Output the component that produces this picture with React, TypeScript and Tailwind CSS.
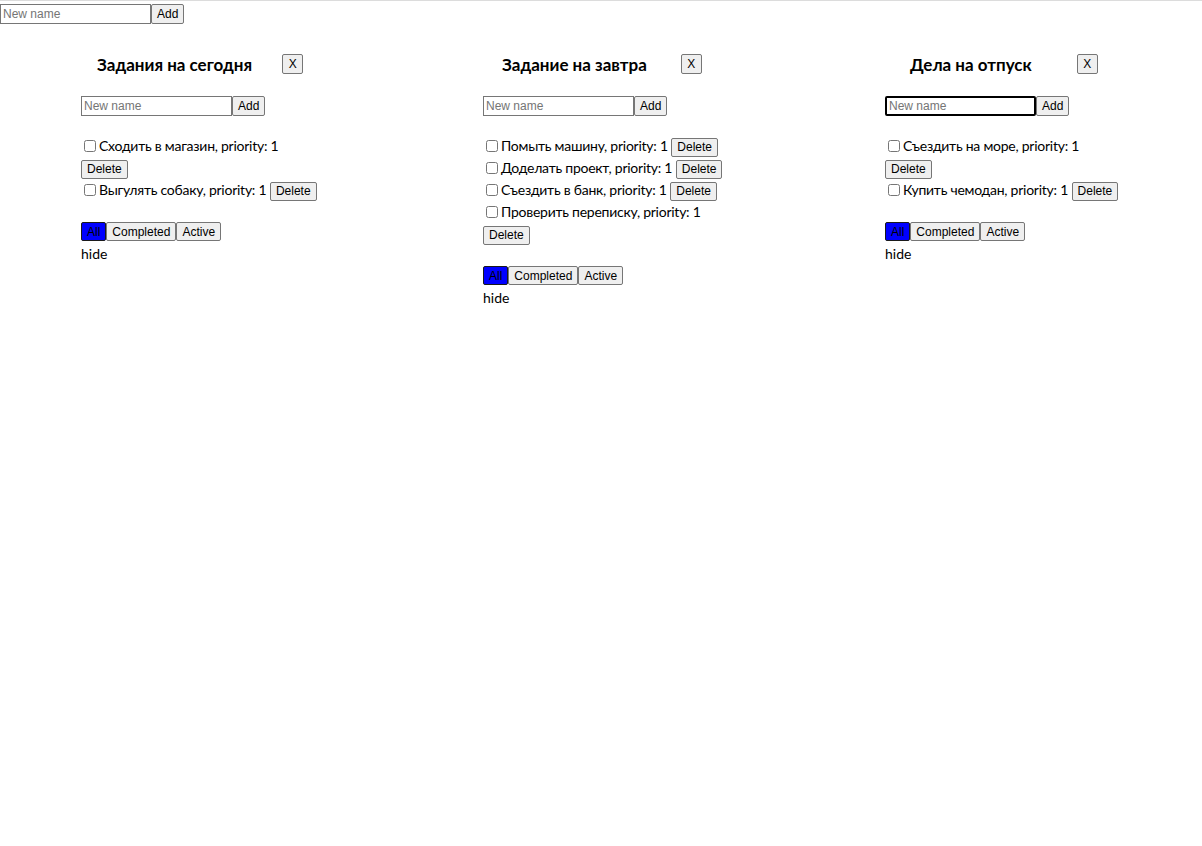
import { useState } from 'react';

type Task = { id: number; title: string; priority: number; breakDelete?: boolean };

type Todo = {
  id: number;
  title: string;
  titleClass: string;
  xClass: string;
  focused?: boolean;
  tasks: Task[];
};

const todos: Todo[] = [
  {
    id: 1,
    title: 'Задания на сегодня',
    titleClass: 'ml-[16px]',
    xClass: 'ml-[30px]',
    tasks: [
      { id: 1, title: 'Сходить в магазин', priority: 1, breakDelete: true },
      { id: 2, title: 'Выгулять собаку', priority: 1 },
    ],
  },
  {
    id: 2,
    title: 'Задание на завтра',
    titleClass: 'ml-[19px]',
    xClass: 'ml-[34px]',
    tasks: [
      { id: 1, title: 'Помыть машину', priority: 1 },
      { id: 2, title: 'Доделать проект', priority: 1 },
      { id: 3, title: 'Съездить в банк', priority: 1 },
      { id: 4, title: 'Проверить переписку', priority: 1, breakDelete: true },
    ],
  },
  {
    id: 3,
    title: 'Дела на отпуск',
    titleClass: 'ml-[25px]',
    xClass: 'ml-[45px]',
    focused: true,
    tasks: [
      { id: 1, title: 'Съездить на море', priority: 1, breakDelete: true },
      { id: 2, title: 'Купить чемодан', priority: 1 },
    ],
  },
];

const base =
  "h-[19px] px-[5px] border rounded-[2px] text-[12px] leading-none text-black font-['Liberation_Sans',Arial,sans-serif]";
const btn = base + ' bg-[#efefef] border-[#767676]';
const activeBtn = base + ' bg-[#0000ff] border-[#1a1a1a]';

function AddForm({ focused }: { focused?: boolean }) {
  return (
    <div className="flex items-center">
      <input
        placeholder="New name"
        className={
          focused
            ? "w-[151px] h-[20px] px-[2px] border-2 border-black rounded-[2px] text-[12px] outline-none placeholder:text-[#757575] font-['Liberation_Sans',Arial,sans-serif]"
            : "w-[151px] h-[20px] px-[2px] border border-[#767676] text-[12px] outline-none placeholder:text-[#757575] font-['Liberation_Sans',Arial,sans-serif]"
        }
      />
      <button className={base + ' bg-[#efefef] border-[#767676] h-[20px]'}>Add</button>
    </div>
  );
}

function TodoList({ todo }: { todo: Todo }) {
  const [filter, setFilter] = useState('all');
  return (
    <div className="w-[402px] shrink-0">
      <div className="flex items-start h-[42px]">
        <h3 className={"mt-[1px] text-[17px] font-bold leading-[20px] " + todo.titleClass}>{todo.title}</h3>
        <button className={base + ' bg-[#efefef] border-[#767676] w-[21px] h-[20px] px-0 ' + todo.xClass}>X</button>
      </div>
      <AddForm focused={todo.focused} />
      <ul className="mt-[19px]">
        {todo.tasks.map((t) => (
          <li key={t.id} className="leading-[22px] whitespace-nowrap">
            <input type="checkbox" className="ml-[3px] mr-[3px] w-[12px] h-[12px] align-[-1px]" />
            <span className="tracking-[-0.25px]">
              {t.title}, priority: {t.priority}
            </span>{' '}
            {t.breakDelete && <br />}
            <button className={btn}>Delete</button>
          </li>
        ))}
      </ul>
      <div className="flex mt-[21px]">
        <button onClick={() => setFilter('all')} className={filter === 'all' ? activeBtn : btn}>
          All
        </button>
        <button onClick={() => setFilter('completed')} className={filter === 'completed' ? activeBtn : btn}>
          Completed
        </button>
        <button onClick={() => setFilter('active')} className={filter === 'active' ? activeBtn : btn}>
          Active
        </button>
      </div>
      <div className="text-[14px] leading-[19px] mt-[3px]">hide</div>
    </div>
  );
}

export default function App() {
  return (
    <div className="min-h-[846px] overflow-hidden bg-white border-t border-[#dcdcdc] text-black text-[14px] font-['Lato','Noto_Sans',sans-serif]">
      <div className="pt-[3px]">
        <AddForm />
      </div>
      <div className="flex pl-[81px] mt-[30px]">
        {todos.map((td) => (
          <TodoList key={td.id} todo={td} />
        ))}
      </div>
    </div>
  );
}
